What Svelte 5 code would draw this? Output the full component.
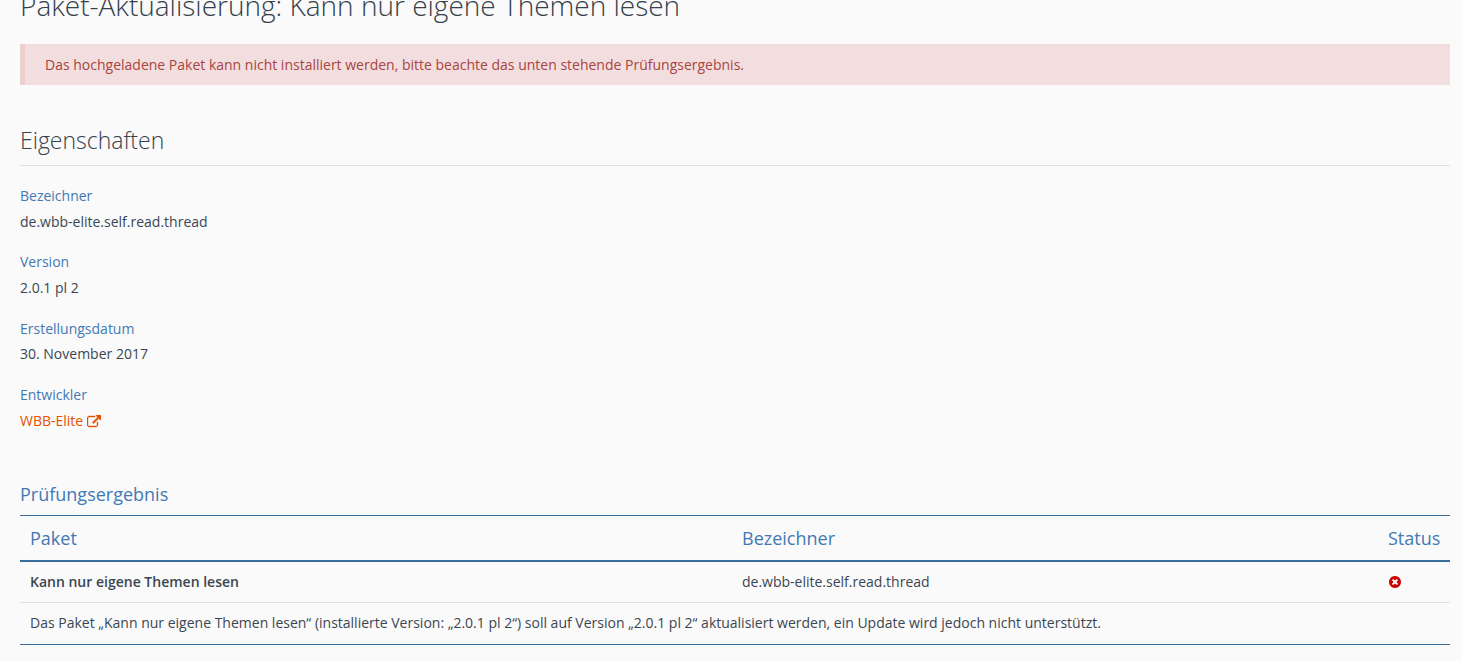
<script>
  const fields = [
    { label: "Bezeichner", value: "de.wbb-elite.self.read.thread" },
    { label: "Version", value: "2.0.1 pl 2" },
    { label: "Erstellungsdatum", value: "30. November 2017" }
  ];
</script>

<div class="content">
  <h1 class="page-title">Paket-Aktualisierung: Kann nur eigene Themen lesen</h1>

  <p class="error">Das hochgeladene Paket kann nicht installiert werden, bitte beachte das unten stehende Prüfungsergebnis.</p>

  <section class="props">
    <h2>Eigenschaften</h2>
    <dl>
      {#each fields as field}
        <dt>{field.label}</dt>
        <dd>{field.value}</dd>
      {/each}
      <dt>Entwickler</dt>
      <dd>
        <a href="#dev">WBB-Elite
          <svg class="ext" viewBox="0 0 1792 1792" aria-hidden="true"><path d="M1408 928v320q0 119-84.5 203.5t-203.5 84.5h-832q-119 0-203.5-84.5t-84.5-203.5v-832q0-119 84.5-203.5t203.5-84.5h704q14 0 23 9t9 23v64q0 14-9 23t-23 9h-704q-66 0-113 47t-47 113v832q0 66 47 113t113 47h832q66 0 113-47t47-113v-320q0-14 9-23t23-9h64q14 0 23 9t9 23zm384-864v512q0 26-19 45t-45 19-45-19l-176-176-652 652q-10 10-23 10t-23-10l-114-114q-10-10-10-23t10-23l652-652-176-176q-19-19-19-45t19-45 45-19h512q26 0 45 19t19 45z"/></svg>
        </a>
      </dd>
    </dl>
  </section>

  <section class="result">
    <h2>Prüfungsergebnis</h2>
    <table>
      <thead>
        <tr>
          <th class="col-name">Paket</th>
          <th class="col-id">Bezeichner</th>
          <th class="col-status">Status</th>
        </tr>
      </thead>
      <tbody>
        <tr>
          <td class="name">Kann nur eigene Themen lesen</td>
          <td>de.wbb-elite.self.read.thread</td>
          <td>
            <svg class="fail" viewBox="0 0 1792 1792" aria-hidden="true"><path d="M1277 1122q0-26-19-45l-181-181 181-181q19-19 19-45 0-27-19-46l-90-90q-19-19-46-19-26 0-45 19l-181 181-181-181q-19-19-45-19-27 0-46 19l-90 90q-19 19-19 46 0 26 19 45l181 181-181 181q-19 19-19 45 0 27 19 46l90 90q19 19 46 19 26 0 45-19l181-181 181 181q19 19 45 19 27 0 46-19l90-90q19-19 19-46zm387-226q0 209-103 385.5t-279.5 279.5-385.5 103-385.5-103-279.5-279.5-103-385.5 103-385.5 279.5-279.5 385.5-103 385.5 103 279.5 279.5 103 385.5z"/></svg>
          </td>
        </tr>
        <tr>
          <td colspan="3">Das Paket „Kann nur eigene Themen lesen“ (installierte Version: „2.0.1 pl 2“) soll auf Version „2.0.1 pl 2“ aktualisiert werden, ein Update wird jedoch nicht unterstützt.</td>
        </tr>
      </tbody>
    </table>
  </section>
</div>

<style>
  :global(body) {
    background: #fafafa;
    color: #3a4652;
    font-family: "Open Sans", sans-serif;
    font-size: 14px;
    overflow: hidden;
  }
  .content {
    height: 661px;
    overflow: hidden;
    padding: 0 12px 0 20px;
    box-sizing: border-box;
  }
  .page-title {
    margin: -12px 0 0;
    font-size: 28px;
    font-weight: 300;
    line-height: 34px;
    color: #34404c;
  }
  .error {
    margin: 22px 0 0;
    padding: 11px 20px;
    line-height: 19px;
    border-left: 5px solid #eccfcf;
    background: #f2dede;
    color: #a94442;
  }
  .props {
    margin-top: 39px;
  }
  .props h2 {
    margin: 0;
    padding-bottom: 9px;
    border-bottom: 1px solid #e0e0e0;
    font-size: 23px;
    font-weight: 300;
    line-height: 32px;
    color: #34404c;
  }
  dl {
    margin: 19.85px 0 0;
  }
  dt {
    color: #4279b3;
    line-height: 1.48;
  }
  dd {
    margin: 5px 0 20px;
    line-height: 1.48;
  }
  dd a {
    color: #e65100;
    text-decoration: none;
  }
  .ext {
    width: 14px;
    height: 14px;
    fill: currentColor;
    stroke: currentColor;
    stroke-width: 50;
    vertical-align: -3px;
  }
  .result {
    margin-top: 49.15px;
  }
  .result h2 {
    margin: 0;
    font-size: 18px;
    font-weight: 400;
    line-height: 26px;
    color: #4279b3;
  }
  table {
    width: 100%;
    margin-top: 8px;
    border-collapse: collapse;
    border-top: 1px solid #3a6d9c;
    border-bottom: 1px solid #3a6d9c;
    table-layout: fixed;
  }
  th {
    padding: 9px 10px;
    font-size: 18px;
    font-weight: 400;
    line-height: 26px;
    text-align: left;
    color: #4279b3;
    border-bottom: 2px solid #3a6d9c;
  }
  .col-name { width: 692px; }
  .col-status { width: 52px; text-align: right; }
  td {
    padding: 10px;
    line-height: 1.48;
  }
  tbody tr + tr td {
    border-top: 1px solid #e0e0e0;
  }
  .name {
    font-weight: 600;
  }
  .fail {
    width: 14px;
    height: 14px;
    fill: #c00;
    vertical-align: -2px;
  }
</style>
